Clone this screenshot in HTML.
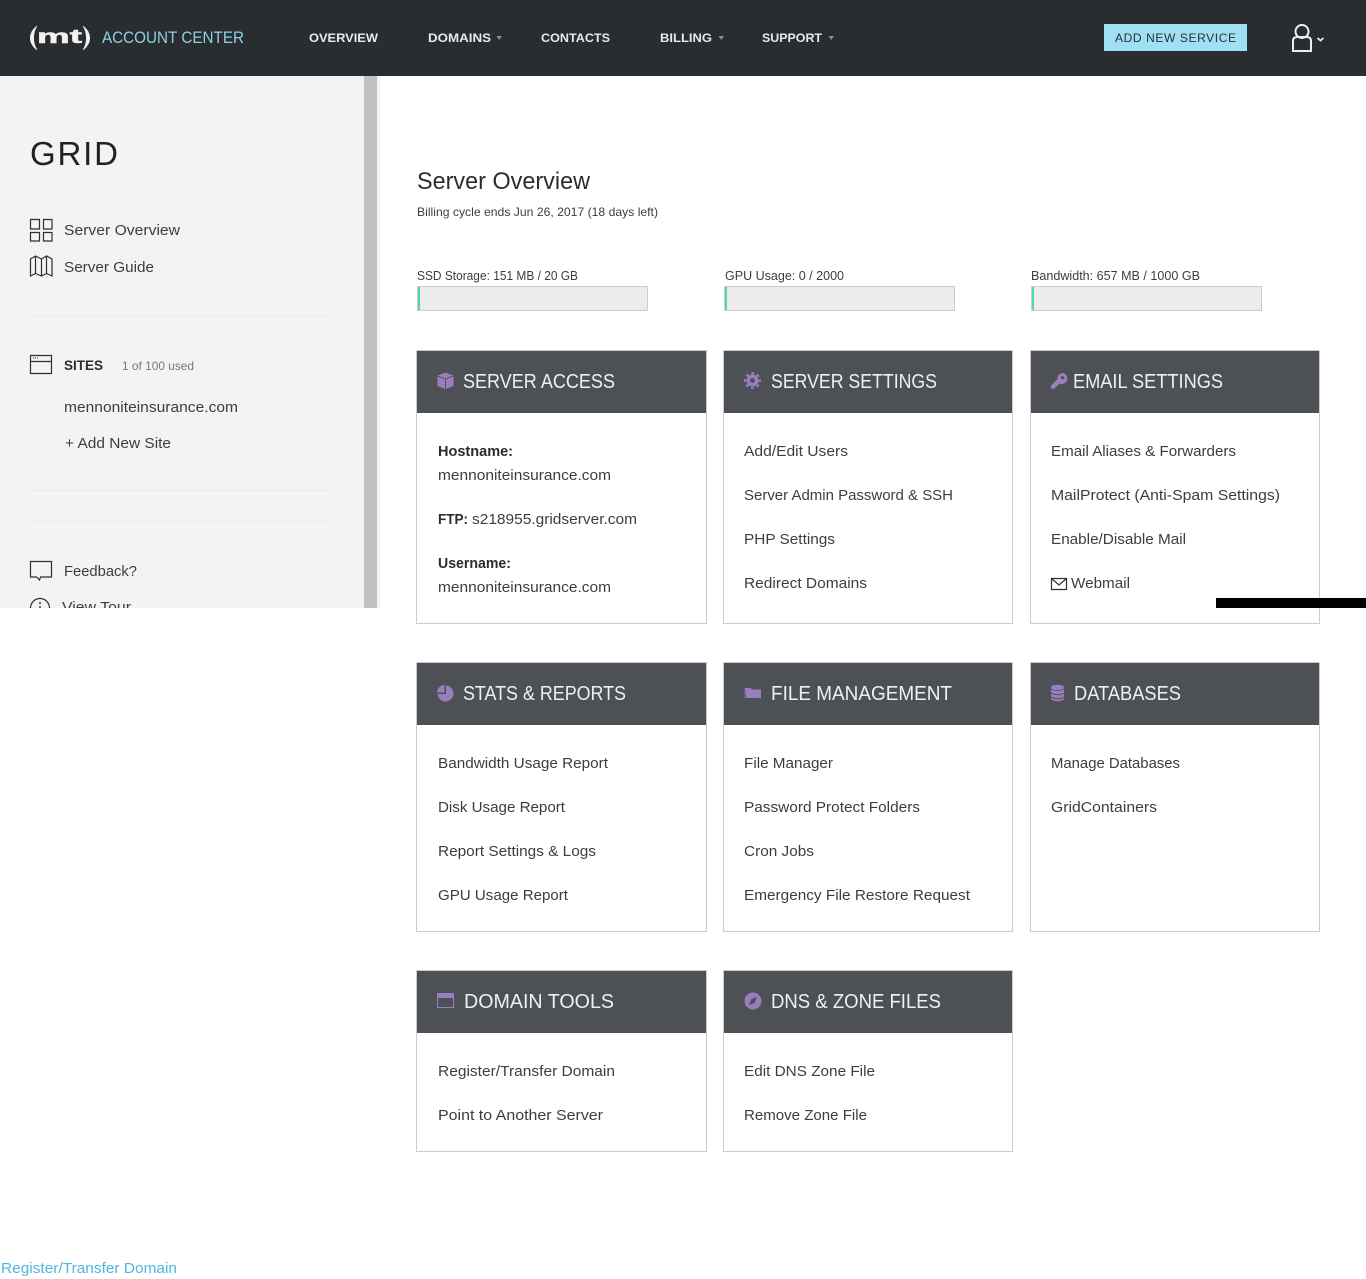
<!DOCTYPE html>
<html lang="en">
<head>
<meta charset="utf-8">
<title>Account Center - Server Overview</title>
<style>
html,body{margin:0;padding:0;background:#fff;width:1366px;height:1279px;overflow:hidden}
svg{display:block;position:absolute;left:0;top:0}
text{font-family:"Liberation Sans",sans-serif;white-space:pre}
.n{font-size:12px;font-weight:700;fill:#e8e9ea}
.l{font-size:15px;fill:#3a3e41}
.b{font-size:15px;font-weight:700;fill:#2a2d30}
.h{font-size:20px;fill:#eef1f2}
.u{font-size:13px;fill:#3a3e41}
.p{fill:#9a7dbd}
.card{fill:#fff;stroke:#cccccc;stroke-width:1}
.bar{fill:#ececec;stroke:#cccccc;stroke-width:1}
.i{fill:none;stroke:#2c3033;stroke-width:1.2}
</style>
</head>
<body>
<svg width="1366" height="1279" viewBox="0 0 1366 1279" xmlns="http://www.w3.org/2000/svg">
<rect width="1366" height="1279" fill="#fff"/>

<!-- header -->
<rect width="1366" height="76" fill="#292d30"/>
<path d="M37 26C28 33 28 43 37 50C32.500 43 32.500 33 37 26z" fill="#f2f2f2" stroke="#f2f2f2" stroke-width=".6"/>
<path d="M83 26C92 33 92 43 83 50C87.500 43 87.500 33 83 26z" fill="#f2f2f2" stroke="#f2f2f2" stroke-width=".6"/>
<text x="37" y="43" font-size="19" font-weight="700" fill="#f2f2f2" stroke="#f2f2f2" stroke-width=".5" textLength="45" lengthAdjust="spacingAndGlyphs">mt</text>
<text x="102" y="43" font-size="17" fill="#8fd2e6" textLength="142" lengthAdjust="spacingAndGlyphs">ACCOUNT CENTER</text>
<text class="n" x="309" y="42" textLength="69" lengthAdjust="spacingAndGlyphs">OVERVIEW</text>
<text class="n" x="428" y="42" textLength="63" lengthAdjust="spacingAndGlyphs">DOMAINS</text>
<path d="M496.500 36h5.500l-2.750 4z" fill="#8b8f92"/>
<text class="n" x="541" y="42" textLength="69" lengthAdjust="spacingAndGlyphs">CONTACTS</text>
<text class="n" x="660" y="42" textLength="52" lengthAdjust="spacingAndGlyphs">BILLING</text>
<path d="M718.500 36h5.500l-2.750 4z" fill="#8b8f92"/>
<text class="n" x="762" y="42" textLength="60" lengthAdjust="spacingAndGlyphs">SUPPORT</text>
<path d="M828.500 36h5.500l-2.750 4z" fill="#8b8f92"/>
<rect x="1104" y="24" width="143" height="27" fill="#a0e0f4"/>
<text x="1115" y="42" font-size="12" fill="#2b3033" textLength="121" lengthAdjust="spacing">ADD NEW SERVICE</text>
<circle cx="1302" cy="31.500" r="6.500" fill="none" stroke="#eeeeee" stroke-width="2"/>
<path d="M1293 52V41q0-4 4-4h10q4 0 4 4v11M1293 51h18" fill="none" stroke="#eeeeee" stroke-width="2"/>
<path d="M1317.500 38l3 2.600 3-2.600" fill="none" stroke="#eeeeee" stroke-width="1.800"/>

<!-- sidebar -->
<clipPath id="sc"><rect x="0" y="76" width="380" height="532"/></clipPath>
<g clip-path="url(#sc)">
<rect x="0" y="76" width="364" height="532" fill="#f3f3f3"/>
<rect x="364" y="76" width="13" height="532" fill="#c1c1c1"/>
<rect x="377" y="76" width="3" height="532" fill="#f1f1f1"/>
<text x="30" y="165" font-size="33" fill="#1f2224" textLength="88" lengthAdjust="spacing">GRID</text>

<path class="i" d="M30.500 219.500h9v9.500h-9zM43.500 219.500h8.500v9.500h-8.500zM30.500 232.500h9v8.500h-9zM43.500 232.500h8.500v8.500h-8.500z"/>
<text class="l" x="64" y="235" textLength="116" lengthAdjust="spacingAndGlyphs">Server Overview</text>
<path class="i" d="M30.500 259l5-3 6 3 5-3 5.500 3v17l-5.500-2.500-5 2.500-6-2.500-5 2.500zM35.500 256v17.500M41.500 259v17M46.500 256v17.500"/>
<text class="l" x="64" y="272" textLength="90" lengthAdjust="spacingAndGlyphs">Server Guide</text>
<rect x="30" y="315" width="301" height="1" fill="#e9e9e9"/>

<path class="i" d="M30.500 355.500h21v18h-21zM30.500 361.500h21"/>
<path d="M33 358h1M35 358h1M37 358h1" stroke="#2c3033" stroke-width="1"/>
<text x="64" y="370" font-size="14" font-weight="700" fill="#2a2d30" textLength="39" lengthAdjust="spacingAndGlyphs">SITES</text>
<text x="122" y="370" font-size="12" fill="#777" textLength="72" lengthAdjust="spacingAndGlyphs">1 of 100 used</text>
<text class="l" x="64" y="412" textLength="174" lengthAdjust="spacingAndGlyphs">mennoniteinsurance.com</text>
<text class="l" x="65" y="448" textLength="106" lengthAdjust="spacingAndGlyphs">+ Add New Site</text>
<rect x="30" y="490" width="301" height="1" fill="#e9e9e9"/>
<rect x="30" y="521" width="301" height="1" fill="#e9e9e9"/>

<path class="i" d="M30.500 561.500h21v15.500h-11l-1 3-3-3h-6z"/>
<text class="l" x="64" y="576" textLength="73" lengthAdjust="spacingAndGlyphs">Feedback?</text>
<circle class="i" cx="40" cy="608" r="9.500"/>
<path d="M40 602v2M40 606v6" stroke="#2c3033" stroke-width="1.400"/>
<text class="l" x="62" y="612" textLength="69" lengthAdjust="spacingAndGlyphs">View Tour</text>
</g>

<!-- page heading -->
<text x="417" y="189" font-size="24" fill="#2a2d30" textLength="173" lengthAdjust="spacingAndGlyphs">Server Overview</text>
<text x="417" y="216" font-size="12" fill="#3a3e41" textLength="241" lengthAdjust="spacingAndGlyphs">Billing cycle ends Jun 26, 2017 (18 days left)</text>

<!-- usage -->
<text class="u" x="417" y="280" textLength="161" lengthAdjust="spacingAndGlyphs">SSD Storage: 151 MB / 20 GB</text>
<rect class="bar" x="417.500" y="286.500" width="230" height="24"/>
<rect x="418" y="287" width="2" height="23" fill="#4fd8a8"/>
<text class="u" x="725" y="280" textLength="119" lengthAdjust="spacingAndGlyphs">GPU Usage: 0 / 2000</text>
<rect class="bar" x="724.500" y="286.500" width="230" height="24"/>
<rect x="725" y="287" width="2" height="23" fill="#4fd8a8"/>
<text class="u" x="1031" y="280" textLength="169" lengthAdjust="spacingAndGlyphs">Bandwidth: 657 MB / 1000 GB</text>
<rect class="bar" x="1031.500" y="286.500" width="230" height="24"/>
<rect x="1032" y="287" width="2" height="23" fill="#4fd8a8"/>

<!-- cards row 1 -->
<rect class="card" x="416.500" y="350.500" width="290" height="273"/>
<rect x="417" y="351" width="289" height="62" fill="#4d5155"/>
<path class="p" d="M445.500 372.500l8 3-8 3-8-3zM437.500 376.500l7.500 2.800V389l-7.500-3zM453.500 376.500l-7.500 2.800V389l7.500-3z"/>
<text class="h" x="463" y="388" textLength="152" lengthAdjust="spacingAndGlyphs">SERVER ACCESS</text>
<text class="b" x="438" y="456" textLength="75" lengthAdjust="spacingAndGlyphs">Hostname:</text>
<text class="l" x="438" y="480" textLength="173" lengthAdjust="spacingAndGlyphs">mennoniteinsurance.com</text>
<text class="b" x="438" y="524" textLength="30" lengthAdjust="spacingAndGlyphs">FTP:</text>
<text class="l" x="472" y="524" textLength="165" lengthAdjust="spacingAndGlyphs">s218955.gridserver.com</text>
<text class="b" x="438" y="568" textLength="73" lengthAdjust="spacingAndGlyphs">Username:</text>
<text class="l" x="438" y="592" textLength="173" lengthAdjust="spacingAndGlyphs">mennoniteinsurance.com</text>

<rect class="card" x="723.500" y="350.500" width="289" height="273"/>
<rect x="724" y="351" width="288" height="62" fill="#4d5155"/>
<circle cx="752.500" cy="380.500" r="4.200" fill="none" stroke="#9a7dbd" stroke-width="3.600"/>
<circle cx="752.500" cy="380.500" r="7.300" fill="none" stroke="#9a7dbd" stroke-width="2.200" stroke-dasharray="2.870 2.860" stroke-dashoffset="1.430"/>
<text class="h" x="771" y="388" textLength="166" lengthAdjust="spacingAndGlyphs">SERVER SETTINGS</text>
<text class="l" x="744" y="456" textLength="104" lengthAdjust="spacingAndGlyphs">Add/Edit Users</text>
<text class="l" x="744" y="500" textLength="209" lengthAdjust="spacingAndGlyphs">Server Admin Password &amp; SSH</text>
<text class="l" x="744" y="544" textLength="91" lengthAdjust="spacingAndGlyphs">PHP Settings</text>
<text class="l" x="744" y="588" textLength="123" lengthAdjust="spacingAndGlyphs">Redirect Domains</text>

<rect class="card" x="1030.500" y="350.500" width="289" height="273"/>
<rect x="1031" y="351" width="288" height="62" fill="#4d5155"/>
<path class="p" fill-rule="evenodd" d="M1062 373a5.500 5.500 0 0 1 5 7.500 5.500 5.500 0 0 1-7.500 3l-5.500 5.500-3-.5-.3-2.500 6.800-7a5.500 5.500 0 0 1 4.500-6zM1062.500 376a1.600 1.600 0 1 0 .01 0z"/>
<text class="h" x="1073" y="388" textLength="150" lengthAdjust="spacingAndGlyphs">EMAIL SETTINGS</text>
<text class="l" x="1051" y="456" textLength="185" lengthAdjust="spacingAndGlyphs">Email Aliases &amp; Forwarders</text>
<text class="l" x="1051" y="500" textLength="229" lengthAdjust="spacingAndGlyphs">MailProtect (Anti-Spam Settings)</text>
<text class="l" x="1051" y="544" textLength="135" lengthAdjust="spacingAndGlyphs">Enable/Disable Mail</text>
<path class="i" d="M1051.500 578.500h15v11h-15zM1051.500 578.500l7.500 6.500 7.500-6.500"/>
<text class="l" x="1071" y="588" textLength="59" lengthAdjust="spacingAndGlyphs">Webmail</text>

<!-- black bar -->
<rect x="1216" y="598" width="150" height="10" fill="#000"/>

<!-- cards row 2 -->
<rect class="card" x="416.500" y="662.500" width="290" height="269"/>
<rect x="417" y="663" width="289" height="62" fill="#4d5155"/>
<path class="p" d="M444.500 685v7.500h-7.500a7.500 7.500 0 0 1 7.500-7.500zM446 685.500a8 8 0 1 1-8.500 8.500h8.500z"/>
<text class="h" x="463" y="700" textLength="163" lengthAdjust="spacingAndGlyphs">STATS &amp; REPORTS</text>
<text class="l" x="438" y="768" textLength="170" lengthAdjust="spacingAndGlyphs">Bandwidth Usage Report</text>
<text class="l" x="438" y="812" textLength="127" lengthAdjust="spacingAndGlyphs">Disk Usage Report</text>
<text class="l" x="438" y="856" textLength="158" lengthAdjust="spacingAndGlyphs">Report Settings &amp; Logs</text>
<text class="l" x="438" y="900" textLength="130" lengthAdjust="spacingAndGlyphs">GPU Usage Report</text>

<rect class="card" x="723.500" y="662.500" width="289" height="269"/>
<rect x="724" y="663" width="288" height="62" fill="#4d5155"/>
<path class="p" d="M744.500 688h6l1.500 1.500h9V698h-14.500z"/>
<path d="M744.500 688l1.500 10h-1.500z" fill="#7f66a5"/>
<text class="h" x="771" y="700" textLength="181" lengthAdjust="spacingAndGlyphs">FILE MANAGEMENT</text>
<text class="l" x="744" y="768" textLength="89" lengthAdjust="spacingAndGlyphs">File Manager</text>
<text class="l" x="744" y="812" textLength="176" lengthAdjust="spacingAndGlyphs">Password Protect Folders</text>
<text class="l" x="744" y="856" textLength="70" lengthAdjust="spacingAndGlyphs">Cron Jobs</text>
<text class="l" x="744" y="900" textLength="226" lengthAdjust="spacingAndGlyphs">Emergency File Restore Request</text>

<rect class="card" x="1030.500" y="662.500" width="289" height="269"/>
<rect x="1031" y="663" width="288" height="62" fill="#4d5155"/>
<ellipse class="p" cx="1057.500" cy="687.500" rx="6.500" ry="2.800"/>
<path class="p" d="M1051 689.500q6.500 3.200 13 0v3.200q-6.500 3-13 0zM1051 693.700q6.500 3 13 0v3.200q-6.500 3-13 0zM1051 697.900q6.500 3 13 0v1.600q-6.500 3.500-13 0z"/>
<text class="h" x="1074" y="700" textLength="107" lengthAdjust="spacingAndGlyphs">DATABASES</text>
<text class="l" x="1051" y="768" textLength="129" lengthAdjust="spacingAndGlyphs">Manage Databases</text>
<text class="l" x="1051" y="812" textLength="106" lengthAdjust="spacingAndGlyphs">GridContainers</text>

<!-- cards row 3 -->
<rect class="card" x="416.500" y="970.500" width="290" height="181"/>
<rect x="417" y="971" width="289" height="62" fill="#4d5155"/>
<rect x="437" y="993" width="17" height="5" fill="#9a7dbd"/>
<rect x="437.500" y="993.500" width="16" height="14" fill="none" stroke="#9a7dbd"/>
<text class="h" x="464" y="1008" textLength="150" lengthAdjust="spacingAndGlyphs">DOMAIN TOOLS</text>
<text class="l" x="438" y="1076" textLength="177" lengthAdjust="spacingAndGlyphs">Register/Transfer Domain</text>
<text class="l" x="438" y="1120" textLength="165" lengthAdjust="spacingAndGlyphs">Point to Another Server</text>

<rect class="card" x="723.500" y="970.500" width="289" height="181"/>
<rect x="724" y="971" width="288" height="62" fill="#4d5155"/>
<circle class="p" cx="753" cy="1001" r="8.500"/>
<path d="M757 997l-2.500 6-5.500 2 2.500-6z" fill="#4d5155"/>
<text class="h" x="771" y="1008" textLength="170" lengthAdjust="spacingAndGlyphs">DNS &amp; ZONE FILES</text>
<text class="l" x="744" y="1076" textLength="131" lengthAdjust="spacingAndGlyphs">Edit DNS Zone File</text>
<text class="l" x="744" y="1120" textLength="123" lengthAdjust="spacingAndGlyphs">Remove Zone File</text>

<!-- footer link -->
<text x="1" y="1273" font-size="15" fill="#4fb6e0" textLength="176" lengthAdjust="spacingAndGlyphs">Register/Transfer Domain</text>
</svg>
</body>
</html>
